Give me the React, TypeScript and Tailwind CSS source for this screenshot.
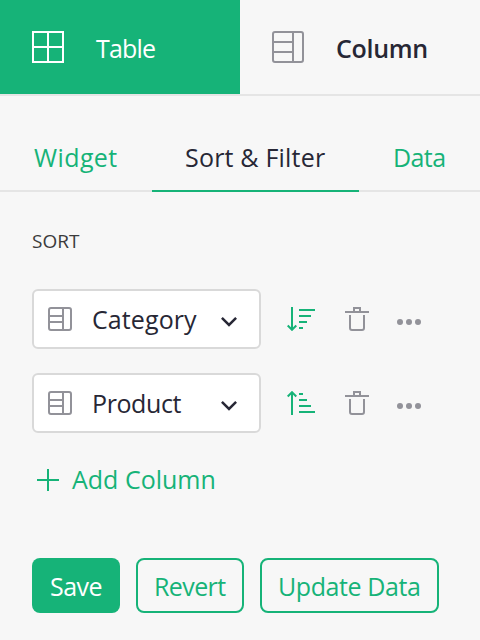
import React from "react";

type IconProps = { className?: string };

function TableIcon() {
  return (
    <svg className="h-8 w-8 shrink-0" viewBox="0 0 32 32" fill="none" stroke="currentColor" strokeWidth="2">
      <path d="M1 1h30v30H1zM16 1v30M1 16h30" />
    </svg>
  );
}

function ColumnIcon() {
  return (
    <svg className="h-8 w-8 shrink-0 text-[#929299]" viewBox="0 0 32 32" fill="none" stroke="currentColor" strokeWidth="2">
      <rect x="1" y="1" width="30" height="30" rx="2" />
      <path d="M21 1v30M1 11h20M1 21h20" />
    </svg>
  );
}

function SmallColumnIcon() {
  return (
    <svg className="h-6 w-6 shrink-0 text-[#929299]" viewBox="0 0 24 24" fill="none" stroke="currentColor" strokeWidth="2">
      <rect x="1" y="1" width="22" height="22" rx="2" />
      <path d="M15 1v22M1 9h14M1 15h14" />
    </svg>
  );
}

function ChevronIcon({ className }: IconProps) {
  return (
    <svg className={className} width="16" height="10" viewBox="0 0 16 10" fill="none" stroke="currentColor" strokeWidth="2.5">
      <path d="M0.9 0.9 8 8 15.1 0.9" />
    </svg>
  );
}

function SortDescIcon() {
  return (
    <svg width="28" height="24" viewBox="0 0 28 24" fill="none" stroke="currentColor" strokeWidth="2">
      <path d="M5 0v23M0.7 18.5 5 22.8 9.3 18.5M12 3h16M12 9h12M12 15h8M12 21h4" />
    </svg>
  );
}

function SortAscIcon() {
  return (
    <svg width="28" height="24" viewBox="0 0 28 24" fill="none" stroke="currentColor" strokeWidth="2">
      <path d="M5 24V1M0.7 5.5 5 1.2 9.3 5.5M12 3h4M12 9h8M12 15h12M12 21h16" />
    </svg>
  );
}

function TrashIcon() {
  return (
    <svg width="24" height="24" viewBox="0 0 24 24" fill="none" stroke="currentColor" strokeWidth="2">
      <path d="M0 5h24M9 5V1h6v4M5 8v13a2 2 0 0 0 2 2h10a2 2 0 0 0 2-2V8" />
    </svg>
  );
}

function DotsIcon() {
  return (
    <svg width="24" height="6" viewBox="0 0 24 6" fill="currentColor">
      <circle cx="3" cy="3" r="3" />
      <circle cx="12" cy="3" r="3" />
      <circle cx="21" cy="3" r="3" />
    </svg>
  );
}

function SortRow({ label, tracking, ascending }: { label: string; tracking: string; ascending?: boolean }) {
  return (
    <div className="flex h-[60px] items-center">
      <button className="flex h-[60px] w-[229px] items-center rounded-md border-2 border-[#d9d9d9] bg-white pl-[14px] text-[#272735]">
        <SmallColumnIcon />
        <span className={`ml-5 w-[129px] text-left ${tracking}`}>{label}</span>
        <ChevronIcon className="mt-[6px]" />
      </button>
      <button className="ml-[26px] text-[#16b378]">{ascending ? <SortAscIcon /> : <SortDescIcon />}</button>
      <button className="ml-[30px] text-[#929299]"><TrashIcon /></button>
      <button className="mt-[6px] ml-[28px] text-[#929299]"><DotsIcon /></button>
    </div>
  );
}

export default function App() {
  return (
    <div className="h-[640px] w-[480px] overflow-hidden bg-[#f7f7f7] font-['Open_Sans','Noto_Sans',sans-serif] text-[25px] leading-8 whitespace-nowrap text-[#272735]">
      <header className="flex h-24 border-b-2 border-[#e5e5e5]">
        <div className="flex w-60 items-center bg-[#16b378] pl-8 text-white">
          <TableIcon />
          <span className="mt-0.5 ml-8 tracking-[-0.8px]">Table</span>
        </div>
        <div className="flex w-60 items-center pl-8">
          <ColumnIcon />
          <span className="mt-0.5 ml-8 font-semibold tracking-[-0.3px]">Column</span>
        </div>
      </header>

      <nav className="flex h-24 text-[#16b378]">
        <div className="w-[152px] border-b-2 border-[#e5e5e5] pt-[45px] pl-[34px] tracking-[0.4px]">Widget</div>
        <div className="w-[207px] border-b-2 border-[#16b378] pt-[45px] pl-[33px] tracking-[0.2px] text-[#272735]">Sort &amp; Filter</div>
        <div className="w-[121px] border-b-2 border-[#e5e5e5] pt-[45px] pl-[34px] tracking-[-0.6px]">Data</div>
      </nav>

      <main className="px-8">
        <h2 className="pt-[33px] text-[19px] text-[#3b3b3b]">SORT</h2>
        <div className="mt-8 flex flex-col gap-6">
          <SortRow label="Category" tracking="tracking-[0.1px]" />
          <SortRow label="Product" tracking="tracking-[-0.4px]" ascending />
        </div>
        <button className="mt-[31px] flex h-8 items-center text-[#16b378]">
          <svg className="ml-[5px]" width="22" height="22" viewBox="0 0 22 22" stroke="currentColor" strokeWidth="2">
            <path d="M11 0v22M0 11h22" />
          </svg>
          <span className="mb-0.5 ml-[13px]">Add Column</span>
        </button>
        <div className="mt-[62px] flex gap-4 text-[#16b378]">
          <button className="h-[55px] w-[88px] rounded-lg bg-[#16b378] pt-px pl-[18px] text-left tracking-[-0.5px] text-white">Save</button>
          <button className="h-[55px] w-[108px] rounded-lg border-2 border-[#16b378] pt-px pl-[16px] text-left tracking-[-0.6px]">Revert</button>
          <button className="h-[55px] w-[179px] rounded-lg border-2 border-[#16b378] pt-px pl-[16px] text-left tracking-[-0.4px]">Update Data</button>
        </div>
      </main>
    </div>
  );
}
